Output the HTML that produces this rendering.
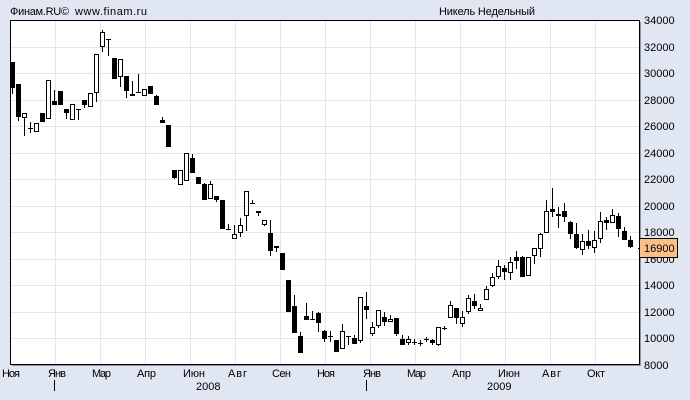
<!DOCTYPE html>
<html><head><meta charset="utf-8"><style>
html,body{margin:0;padding:0;background:#e1e7f2}
svg{display:block}
text{font-family:"Liberation Sans",Arial,sans-serif;font-size:11px;fill:#000}
</style></head><body>
<svg width="690" height="400" viewBox="0 0 690 400" xmlns="http://www.w3.org/2000/svg">
<rect width="690" height="400" fill="#e1e7f2"/>
<rect x="10" y="20" width="630" height="345" fill="#fff"/>
<path shape-rendering="crispEdges" stroke="#e1e7f2" fill="none" d="M55.5 20V364M100.5 20V364M145.5 20V364M190.5 20V364M235.5 20V364M280.5 20V364M325.5 20V364M370.5 20V364M415.5 20V364M460.5 20V364M505.5 20V364M550.5 20V364M595.5 20V364M11 47.5H639M11 73.5H639M11 100.5H639M11 126.5H639M11 153.5H639M11 179.5H639M11 206.5H639M11 232.5H639M11 259.5H639M11 285.5H639M11 312.5H639M11 338.5H639"/>
<path shape-rendering="crispEdges" stroke="#000" fill="none" d="M12.5 62V94M18.5 84V121M24.5 113V136M30.5 122V133M54.5 90V105M66.5 109V119M78.5 109V120M84.5 100V108M96.5 54V102M102.5 30V52M108.5 39V56M120.5 59V87M126.5 76V98M132.5 81V96M138.5 74V92M156.5 95V105M162.5 117V123M174.5 170V179M192.5 154V173M204.5 183V200M210.5 181V199M216.5 196V202M228.5 224V229M234.5 225V239M240.5 218V237M246.5 191V231M252.5 200V203M258.5 211V216M264.5 220V226M270.5 220V256M276.5 246V252M294.5 295V333M300.5 332V353M306.5 303V320M312.5 311V319M318.5 312V332M324.5 330V342M330.5 331V342M342.5 324V349M348.5 336V345M354.5 335V344M360.5 297V343M366.5 292V319M372.5 322V336M378.5 310V328M384.5 312V326M390.5 315V322M396.5 318V336M402.5 335V345M408.5 336V345M414.5 339V345M420.5 340V346M426.5 337V342M432.5 339V345M438.5 327V346M444.5 326V330M450.5 301V318M456.5 308V324M462.5 311V327M468.5 295V314M474.5 294V309M480.5 304V311M486.5 286V300M492.5 273V287M498.5 260V279M504.5 265V280M510.5 257V280M516.5 251V269M522.5 256V277M534.5 248V264M540.5 233V257M546.5 200V233M552.5 188V217M558.5 207V228M564.5 203V222M570.5 221V239M576.5 223V249M582.5 234V255M588.5 230V249M594.5 231V253M600.5 212V243M606.5 217V230M612.5 209V223M618.5 213V237M624.5 227V240M630.5 236V248"/>
<path shape-rendering="crispEdges" fill="#000" d="M10 62h5v26h-5zM16 84h5v33h-5zM40 113h5v9h-5zM52 101h5v4h-5zM58 91h5v14h-5zM64 109h5v4h-5zM82 100h5v5h-5zM112 58h5v21h-5zM124 76h5v15h-5zM130 94h5v2h-5zM148 86h5v8h-5zM154 96h5v9h-5zM160 120h5v3h-5zM166 125h5v22h-5zM172 170h5v8h-5zM190 158h5v15h-5zM196 177h5v7h-5zM202 184h5v16h-5zM214 196h5v4h-5zM220 200h5v29h-5zM256 211h5v2h-5zM268 233h5v18h-5zM274 246h5v2h-5zM280 253h5v17h-5zM286 280h5v32h-5zM292 306h5v27h-5zM298 336h5v17h-5zM304 316h5v4h-5zM316 313h5v10h-5zM322 331h5v8h-5zM334 340h5v12h-5zM352 338h5v6h-5zM364 306h5v4h-5zM382 317h5v5h-5zM394 318h5v16h-5zM400 339h5v6h-5zM430 340h5v3h-5zM454 308h5v10h-5zM472 301h5v5h-5zM502 268h5v4h-5zM514 257h5v4h-5zM520 257h5v20h-5zM550 209h5v3h-5zM562 211h5v6h-5zM568 222h5v12h-5zM574 234h5v14h-5zM586 241h5v5h-5zM604 220h5v3h-5zM616 216h5v13h-5zM622 231h5v9h-5zM628 240h5v7h-5zM28 128h5v1h-5zM76 109h5v1h-5zM106 39h5v1h-5zM136 92h5v1h-5zM226 229h5v1h-5zM250 203h5v1h-5zM310 319h5v1h-5zM328 336h5v1h-5zM346 336h5v1h-5zM412 342h5v1h-5zM418 343h5v1h-5zM424 339h5v1h-5zM442 328h5v1h-5zM556 214h5v2h-5zM638 248h2v1h-2z"/>
<path shape-rendering="crispEdges" fill="#fff" stroke="#000" d="M22.5 113.500h4v4h-4zM34.500 123.500h4v8h-4zM46.500 80.500h4v38h-4zM70.500 104.500h4v15h-4zM88.500 93.500h4v13h-4zM94.500 54.500h4v38h-4zM100.500 32.500h4v14h-4zM118.500 59.500h4v17h-4zM142.500 89.500h4v6h-4zM178.500 170.500h4v14h-4zM184.500 153.500h4v27h-4zM208.500 184.500h4v14h-4zM232.500 234.500h4v4h-4zM238.500 225.500h4v7h-4zM244.500 191.500h4v24h-4zM262.500 220.500h4v4h-4zM340.500 331.500h4v17h-4zM358.500 297.500h4v43h-4zM370.500 327.500h4v6h-4zM376.500 310.500h4v15h-4zM388.500 319.500h4v2h-4zM406.500 339.500h4v3h-4zM436.500 327.500h4v17h-4zM448.500 305.500h4v12h-4zM460.500 317.500h4v6h-4zM466.500 298.500h4v13h-4zM478.500 308.500h4v2h-4zM484.500 289.500h4v10h-4zM490.500 277.500h4v8h-4zM496.500 266.500h4v10h-4zM508.500 262.500h4v10h-4zM526.500 257.500h4v18h-4zM532.500 248.500h4v7h-4zM538.500 234.500h4v14h-4zM544.500 211.500h4v21h-4zM580.500 241.500h4v8h-4zM592.500 240.500h4v7h-4zM598.500 221.500h4v17h-4zM610.500 215.500h4v7h-4z"/>
<path shape-rendering="crispEdges" fill="none" stroke="#8f939a" d="M640.500 22V365.500H12"/>
<rect shape-rendering="crispEdges" x="10.500" y="20.500" width="629" height="344" fill="none" stroke="#000"/>
<text x="10" y="15" textLength="59">Финам.RU©</text>
<text x="75" y="15" textLength="72">www.finam.ru</text>
<text x="439" y="15" textLength="96">Никель Недельный</text>
<text x="644" y="24">34000</text>
<text x="644" y="51">32000</text>
<text x="644" y="77">30000</text>
<text x="644" y="104">28000</text>
<text x="644" y="130">26000</text>
<text x="644" y="157">24000</text>
<text x="644" y="183">22000</text>
<text x="644" y="210">20000</text>
<text x="644" y="236">18000</text>
<text x="644" y="263">16000</text>
<text x="644" y="289">14000</text>
<text x="644" y="316">12000</text>
<text x="644" y="342">10000</text>
<text x="644" y="369">8000</text>
<rect shape-rendering="crispEdges" x="639.500" y="238.500" width="38" height="19" fill="#fdbf8a" stroke="#000"/>
<text x="644" y="252">16900</text>
<text x="2" y="377" textLength="18">Ноя</text>
<text x="48" y="377" textLength="18">Янв</text>
<text x="92" y="377" textLength="19">Мар</text>
<text x="137" y="377" textLength="19">Апр</text>
<text x="183" y="377" textLength="22">Июн</text>
<text x="228" y="377" textLength="19">Авг</text>
<text x="272" y="377" textLength="19">Сен</text>
<text x="317" y="377" textLength="18">Ноя</text>
<text x="363" y="377" textLength="18">Янв</text>
<text x="407" y="377" textLength="19">Мар</text>
<text x="452" y="377" textLength="19">Апр</text>
<text x="498" y="377" textLength="22">Июн</text>
<text x="542" y="377" textLength="19">Авг</text>
<text x="587" y="377" textLength="18">Окт</text>
<text x="196" y="390">2008</text>
<text x="487" y="390">2009</text>
<path shape-rendering="crispEdges" stroke="#000" d="M54.500 380V391M366.500 380V391"/>
</svg>
</body></html>
